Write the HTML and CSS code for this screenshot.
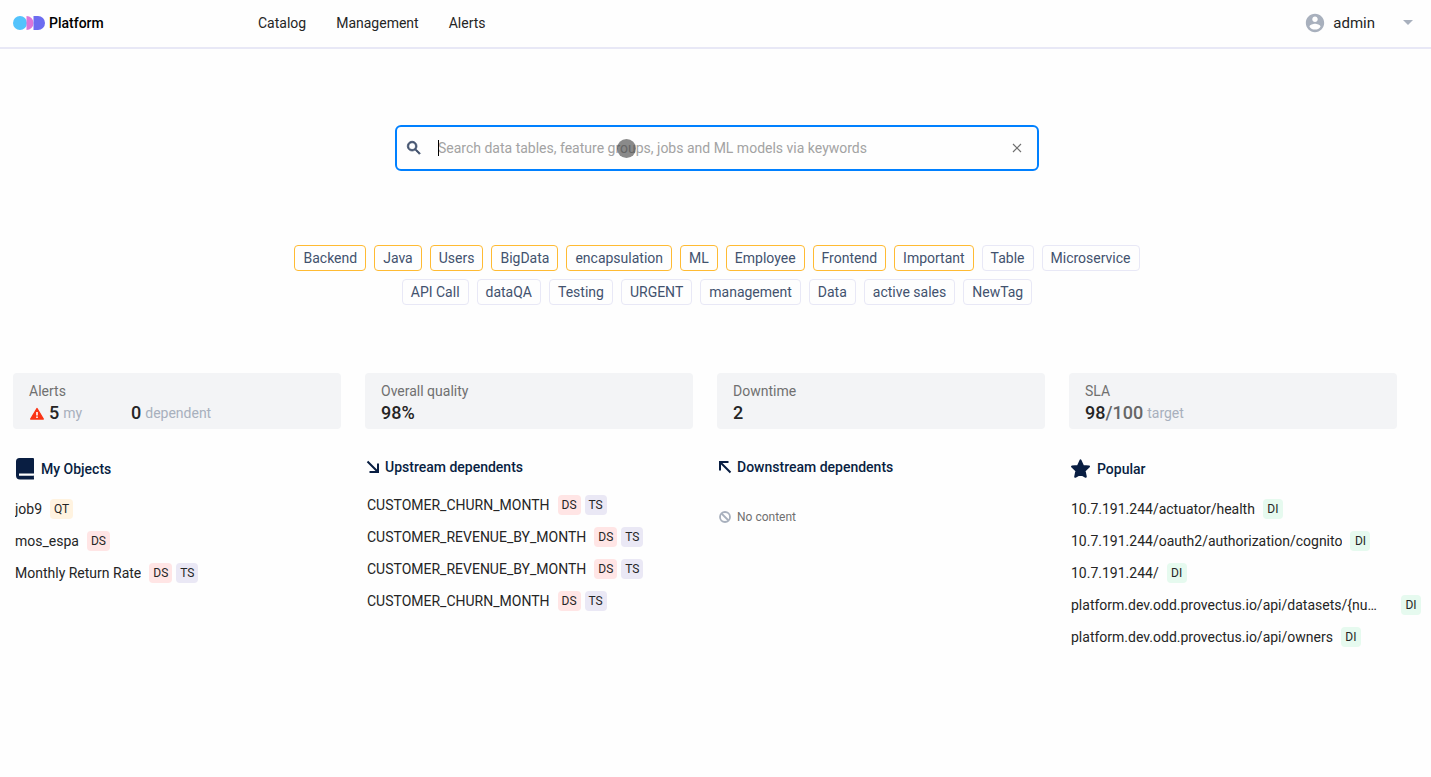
FILE: index.html
```html
<!DOCTYPE html>
<html lang="en">
<head>
<meta charset="utf-8">
<title>Platform</title>
<link rel="stylesheet" href="styles.css">
</head>
<body>
<header class="header">
  <a class="brand" href="#">
    <svg class="brand-logo" width="32" height="14" viewBox="0 0 32 14" aria-hidden="true">
      <circle cx="7" cy="7" r="7" fill="#53c3fc"/>
      <path d="M13.500 0a7 7 0 0 1 0 14z" fill="#dc76d8"/>
      <path d="M20.500 0H25a7 7 0 0 1 0 14h-4.500z" fill="#6c6cf0"/>
    </svg>
    <span>Platform</span>
  </a>
  <nav class="nav">
    <a href="#">Catalog</a>
    <a href="#">Management</a>
    <a href="#">Alerts</a>
  </nav>
  <button class="user" type="button">
    <svg width="22" height="22" viewBox="0 0 24 24" fill="#a8b0bd" aria-hidden="true"><path d="M12 2C6.480 2 2 6.480 2 12s4.480 10 10 10 10-4.480 10-10S17.520 2 12 2zm0 3c1.660 0 3 1.340 3 3s-1.340 3-3 3-3-1.340-3-3 1.340-3 3-3zm0 14.200c-2.500 0-4.710-1.280-6-3.220.030-1.990 4-3.080 6-3.080 1.990 0 5.970 1.090 6 3.080-1.290 1.940-3.500 3.220-6 3.220z"/></svg>
    <span class="user-name">admin</span>
    <svg width="10" height="5" viewBox="0 0 10 5" fill="#a8b0bd" aria-hidden="true"><path d="M0 0h10L5 5z"/></svg>
  </button>
</header>

<main>
  <form class="search" role="search">
    <svg class="search-icon" width="18" height="18" viewBox="0 0 24 24" fill="#42526e" stroke="#42526e" stroke-width="1" aria-hidden="true"><path d="M15.500 14h-.790l-.280-.270A6.471 6.471 0 0 0 16 9.500 6.500 6.500 0 1 0 9.500 16c1.610 0 3.090-.590 4.230-1.570l.270.280v.790l5 4.990L20.490 19l-4.990-5zm-6 0C7.010 14 5 11.990 5 9.500S7.010 5 9.500 5 14 7.010 14 9.500 11.990 14 9.500 14z"/></svg>
    <div class="search-field">
      <input type="text" aria-label="Search" placeholder="Search data tables, feature groups, jobs and ML models via keywords">
      <span class="caret"></span>
    </div>
    <button class="search-clear" type="button" aria-label="Clear">
      <svg width="10" height="10" viewBox="0 0 10 10" fill="none" stroke="#707070" stroke-width="1.200" aria-hidden="true"><path d="M1 1l8 8M9 1l-8 8"/></svg>
    </button>
    <span class="pointer"></span>
  </form>

  <div class="tags">
    <button type="button" class="tag important">Backend</button>
    <button type="button" class="tag important">Java</button>
    <button type="button" class="tag important">Users</button>
    <button type="button" class="tag important">BigData</button>
    <button type="button" class="tag important">encapsulation</button>
    <button type="button" class="tag important">ML</button>
    <button type="button" class="tag important">Employee</button>
    <button type="button" class="tag important">Frontend</button>
    <button type="button" class="tag important">Important</button>
    <button type="button" class="tag">Table</button>
    <button type="button" class="tag">Microservice</button>
    <button type="button" class="tag">API Call</button>
    <button type="button" class="tag">dataQA</button>
    <button type="button" class="tag">Testing</button>
    <button type="button" class="tag">URGENT</button>
    <button type="button" class="tag">management</button>
    <button type="button" class="tag">Data</button>
    <button type="button" class="tag">active sales</button>
    <button type="button" class="tag">NewTag</button>
  </div>

  <div class="board">
    <section class="column">
      <div class="card">
        <div class="card-label">Alerts</div>
        <div class="card-value">
          <div class="alert-mine">
            <svg width="16" height="16" viewBox="0 0 16 16" aria-hidden="true"><path d="M8 3.500L14.300 14H1.700z" fill="#fa3415" stroke="#fa3415" stroke-width="1.400" stroke-linejoin="round"/><path d="M8 7v3.400M8 11.400V13" stroke="#fff" stroke-width="1.600"/></svg>
            <b>5</b><small>my</small>
          </div>
          <b>0</b><small>dependent</small>
        </div>
      </div>
      <h2 class="title">
        <svg width="24" height="24" viewBox="0 0 24 24" aria-hidden="true"><path d="M6.500 1H20a1 1 0 0 1 1 1v14.500H6v2.200h14.500v2.200H21v1a.7.700 0 0 1-.7.700H7a4 4 0 0 1-4-4V4.500A3.500 3.500 0 0 1 6.500 1z" fill="#091e42"/><path d="M20 18.700h1l-.3 1.200.3 1.500h-1z" fill="#091e42"/></svg>
        <span>My Objects</span>
      </h2>
      <ul class="list">
        <li><a href="#">job9</a><span class="badge qt">QT</span></li>
        <li><a href="#">mos_espa</a><span class="badge ds">DS</span></li>
        <li><a href="#">Monthly Return Rate</a><span class="badge ds">DS</span><span class="badge ts">TS</span></li>
      </ul>
    </section>

    <section class="column">
      <div class="card">
        <div class="card-label">Overall quality</div>
        <div class="card-value"><b>98%</b></div>
      </div>
      <h2 class="title">
        <svg width="16" height="16" viewBox="0 0 16 16" fill="none" stroke="#091e42" stroke-width="2" aria-hidden="true"><path d="M2.500 2.500L12.500 12.500M13 4.500V13H4.500"/></svg>
        <span>Upstream dependents</span>
      </h2>
      <ul class="list">
        <li><a href="#">CUSTOMER_CHURN_MONTH</a><span class="badge ds">DS</span><span class="badge ts">TS</span></li>
        <li><a href="#">CUSTOMER_REVENUE_BY_MONTH</a><span class="badge ds">DS</span><span class="badge ts">TS</span></li>
        <li><a href="#">CUSTOMER_REVENUE_BY_MONTH</a><span class="badge ds">DS</span><span class="badge ts">TS</span></li>
        <li><a href="#">CUSTOMER_CHURN_MONTH</a><span class="badge ds">DS</span><span class="badge ts">TS</span></li>
      </ul>
    </section>

    <section class="column">
      <div class="card">
        <div class="card-label">Downtime</div>
        <div class="card-value"><b>2</b></div>
      </div>
      <h2 class="title">
        <svg width="16" height="16" viewBox="0 0 16 16" fill="none" stroke="#091e42" stroke-width="2" aria-hidden="true"><path d="M13.500 13.500L3.500 3.500M3 11.500V3H11.500"/></svg>
        <span>Downstream dependents</span>
      </h2>
      <p class="empty">
        <svg width="12" height="12" viewBox="0 0 12 12" fill="none" stroke="#a8b0bd" stroke-width="1.800" aria-hidden="true"><circle cx="6" cy="6" r="5"/><path d="M2.500 2.500l7 7"/></svg>
        <span>No content</span>
      </p>
    </section>

    <section class="column">
      <div class="card">
        <div class="card-label">SLA</div>
        <div class="card-value"><b>98<span class="of">/100</span></b><small>target</small></div>
      </div>
      <h2 class="title">
        <svg width="24" height="24" viewBox="0 0 24 24" fill="#091e42" stroke="#091e42" stroke-width="2" stroke-linejoin="round" aria-hidden="true"><path d="M11.500 3.400l2.500 5.500 6 .7-4.400 4.200 1.200 6-5.300-3-5.300 3 1.200-6L3 9.600l6-.7z"/></svg>
        <span>Popular</span>
      </h2>
      <ul class="list">
        <li><a href="#">10.7.191.244/actuator/health</a><span class="badge di">DI</span></li>
        <li><a href="#">10.7.191.244/oauth2/authorization/cognito</a><span class="badge di">DI</span></li>
        <li><a href="#">10.7.191.244/</a><span class="badge di">DI</span></li>
        <li><a class="long" href="#">platform.dev.odd.provectus.io/api/datasets/{nu…</a><span class="badge di">DI</span></li>
        <li><a href="#">platform.dev.odd.provectus.io/api/owners</a><span class="badge di">DI</span></li>
      </ul>
    </section>
  </div>
</main>
</body>
</html>
```
FILE: styles.css
```css
* { box-sizing: border-box; }
body {
  margin: 0;
  background: #fefefe;
  color: #252525;
  font: 400 14px/20px Roboto, sans-serif;
}
a { color: inherit; text-decoration: none; }
button { font: inherit; color: inherit; background: none; border: 0; padding: 0; cursor: pointer; }
svg { flex: none; display: block; }

.header {
  display: flex;
  align-items: center;
  height: 49px;
  padding: 0 18px 2px 13px;
  border-bottom: 2px solid #e8e8f6;
}
.brand { display: flex; align-items: center; gap: 4px; width: 245px; font-weight: 500; color: #000; }
.nav { display: flex; gap: 30px; }
.user { display: flex; align-items: center; margin-left: auto; font-size: 15px; }
.user-name { margin: 0 28px 0 7px; }

main { padding: 76px 10px 24px 13px; }

.search {
  position: relative;
  display: flex;
  align-items: center;
  max-width: 644px;
  height: 46px;
  margin: 0 auto;
  padding: 0 15px 0 8px;
  border: 2px solid #0080ff;
  border-radius: 6px;
}
.search-field { position: relative; flex: 1; margin-left: 15px; }
.search-field input {
  display: block;
  width: 100%;
  padding: 0;
  border: 0;
  outline: 0;
  background: none;
  font: inherit;
}
.search-field input::placeholder { color: #a3a3a3; opacity: 1; }
.caret { position: absolute; left: 0; top: 2px; width: 1px; height: 16px; background: #000; }
.pointer {
  position: absolute;
  left: 220px;
  top: 12px;
  width: 19px;
  height: 19px;
  border-radius: 50%;
  background: rgba(60, 60, 60, .6);
}

.tags {
  display: flex;
  flex-wrap: wrap;
  justify-content: center;
  gap: 8px;
  max-width: 860px;
  margin: 74px auto 0;
}
.tag {
  height: 26px;
  padding: 0 8px;
  border: 1px solid #e8e8f6;
  border-radius: 4px;
  color: #42526e;
}
.tag.important { border-color: #ffbb33; }

.board {
  display: grid;
  grid-template-columns: repeat(4, minmax(0, 1fr));
  margin-top: 68px;
}
.card {
  margin: 0 24px 28px 0;
  padding: 8px 16px 4px;
  border-radius: 4px;
  background: #f3f4f6;
}
.card-label { color: #707070; }
.card-value { display: flex; align-items: center; gap: 4px; height: 24px; }
.card-value b { font-size: 18px; font-weight: 500; }
.card-value small { font-size: 14px; color: #a8b0bd; }
.of { color: #666; }
.alert-mine { display: flex; align-items: center; gap: 4px; width: 98px; }

.title {
  display: flex;
  align-items: center;
  gap: 4px;
  margin: 0 0 12px;
  font-size: 14px;
  font-weight: 500;
  color: #091e42;
}
.list { margin: 0; padding: 0 0 0 2px; list-style: none; }
.list li { display: flex; align-items: center; gap: 4px; height: 32px; }
.list a { margin-right: 4px; overflow: hidden; text-overflow: ellipsis; white-space: nowrap; }
.list .long { flex: 1; }
.badge { flex: none; min-width: 20px; padding: 0 4px; border-radius: 4px; font-size: 12px; text-align: center; }
.qt { background: #fff3e0; }
.ds { background: #ffe5e5; }
.ts { background: #eae8f5; }
.di { background: #e6faef; }
.empty {
  display: flex;
  align-items: center;
  gap: 6px;
  margin: 0;
  padding: 18px 0 0 2px;
  font-size: 12px;
  color: #707070;
}
```
